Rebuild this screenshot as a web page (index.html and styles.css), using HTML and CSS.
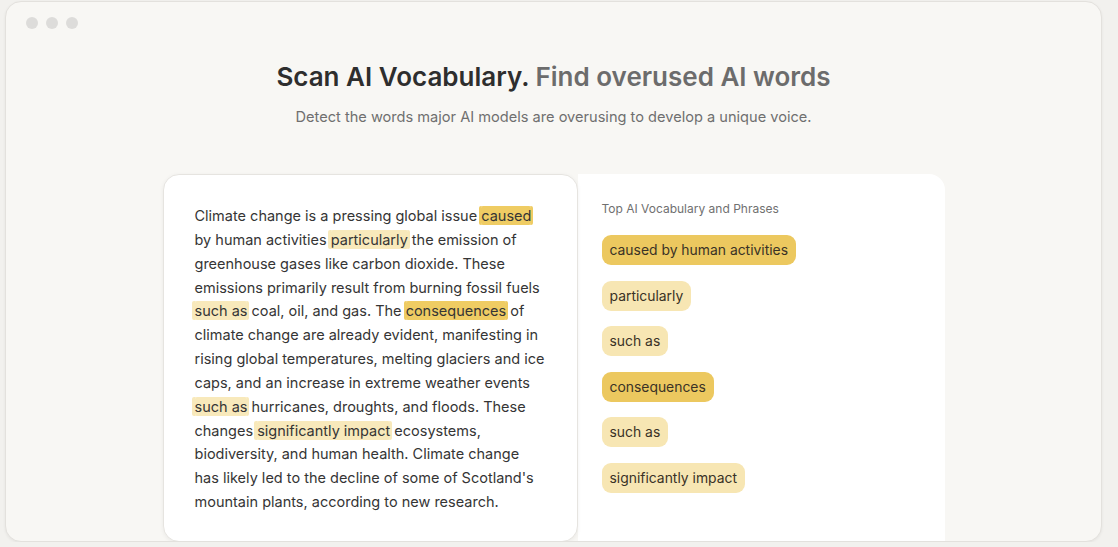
FILE: index.html
```html
<!DOCTYPE html>
<html lang="en">
<head>
<meta charset="utf-8">
<title>Scan AI Vocabulary</title>
<link rel="stylesheet" href="styles.css">
</head>
<body>
<div class="window">
  <div class="dots"><span class="dot"></span><span class="dot"></span><span class="dot"></span></div>
  <h1 class="title">Scan AI Vocabulary. <span class="title-muted">Find overused AI words</span></h1>
  <p class="subtitle">Detect the words major AI models are overusing to develop a unique voice.</p>
  <div class="panels">
    <div class="text-card">
      <p class="body-text">Climate change is a pressing global issue <span class="hl hl-strong">caused</span> by human activities <span class="hl hl-soft">particularly</span> the emission of greenhouse gases like carbon dioxide. These emissions primarily result from burning fossil fuels <span class="hl hl-soft">such as</span> coal, oil, and gas. The <span class="hl hl-strong">consequences</span> of climate change are already evident, manifesting in rising global temperatures, melting glaciers and ice caps, and an increase in extreme weather events <span class="hl hl-soft">such as</span> hurricanes, droughts, and floods. These changes <span class="hl hl-soft">significantly impact</span> ecosystems, biodiversity, and human health. Climate change has likely led to the decline of some of Scotland's mountain plants, according to new research.</p>
    </div>
    <div class="vocab-panel">
      <div class="vocab-title">Top AI Vocabulary and Phrases</div>
      <div class="chips">
        <span class="chip chip-strong">caused by human activities</span>
        <span class="chip chip-soft">particularly</span>
        <span class="chip chip-soft">such as</span>
        <span class="chip chip-strong">consequences</span>
        <span class="chip chip-soft">such as</span>
        <span class="chip chip-soft">significantly impact</span>
      </div>
    </div>
  </div>
</div>
</body>
</html>
```

FILE: styles.css
```css
* { box-sizing: border-box; }
html, body {
  margin: 0;
  padding: 0;
  background: #f2f1ee;
}
body {
  font-family: Inter, "Noto Sans", "Liberation Sans", sans-serif;
  color: #333;
  padding: 1px 0 0 5px;
}
.window {
  width: 1097px;
  height: 541px;
  background: #f8f7f4;
  border: 1px solid #e3e1dd;
  border-radius: 16px;
  box-shadow: 0 1px 3px rgba(0,0,0,0.06);
  overflow: hidden;
  display: flex;
  flex-direction: column;
  align-items: center;
}
.dots {
  align-self: flex-start;
  display: flex;
  gap: 8px;
  padding: 15px 0 0 20px;
}
.dot {
  width: 12px;
  height: 12px;
  border-radius: 50%;
  background: #dddcda;
}
.title {
  margin: 31px 0 0;
  font-size: 26px;
  line-height: 34px;
  font-weight: 600;
  color: #2e2e2e;
}
.title-muted { color: #6c6c6c; }
.subtitle {
  margin: 13px 0 0;
  font-size: 14.6px;
  line-height: 20px;
  color: #6f6f6f;
}
.panels {
  margin-top: 47px;
  display: flex;
  width: 782px;
  flex: 1;
  min-height: 0;
}
.text-card {
  position: relative;
  z-index: 1;
  width: 415px;
  background: #fff;
  border: 1px solid #e6e4e0;
  border-radius: 16px;
  box-shadow: 0 1px 4px rgba(0,0,0,0.06);
  padding: 29px 31px;
  height: 368px;
}
.body-text {
  margin: 0;
  font-size: 14.5px;
  line-height: 23.85px;
  color: #353535;
}
.hl {
  padding: 1px 0;
  border-radius: 2px;
}
.hl-strong { background: #efcc63; box-shadow: -2px 0 0 #efcc63, 2px 0 0 #efcc63; }
.hl-soft { background: #f8e9bb; box-shadow: -3px 0 0 #f8e9bb, 2px 0 0 #f8e9bb; }
.vocab-panel {
  flex: 1;
  background: #fff;
  border-radius: 0 16px 0 0;
  padding: 27px 24px;
}
.vocab-title {
  font-size: 12px;
  line-height: 16px;
  color: #707070;
}
.chips {
  margin-top: 18px;
  display: flex;
  flex-direction: column;
  align-items: flex-start;
  gap: 15.5px;
}
.chip {
  font-size: 13.9px;
  line-height: 18px;
  padding: 6px 8px;
  border-radius: 9px;
  color: #3a3226;
}
.chip-strong { background: #ecc85f; }
.chip-soft { background: #f7e6b3; }
```
